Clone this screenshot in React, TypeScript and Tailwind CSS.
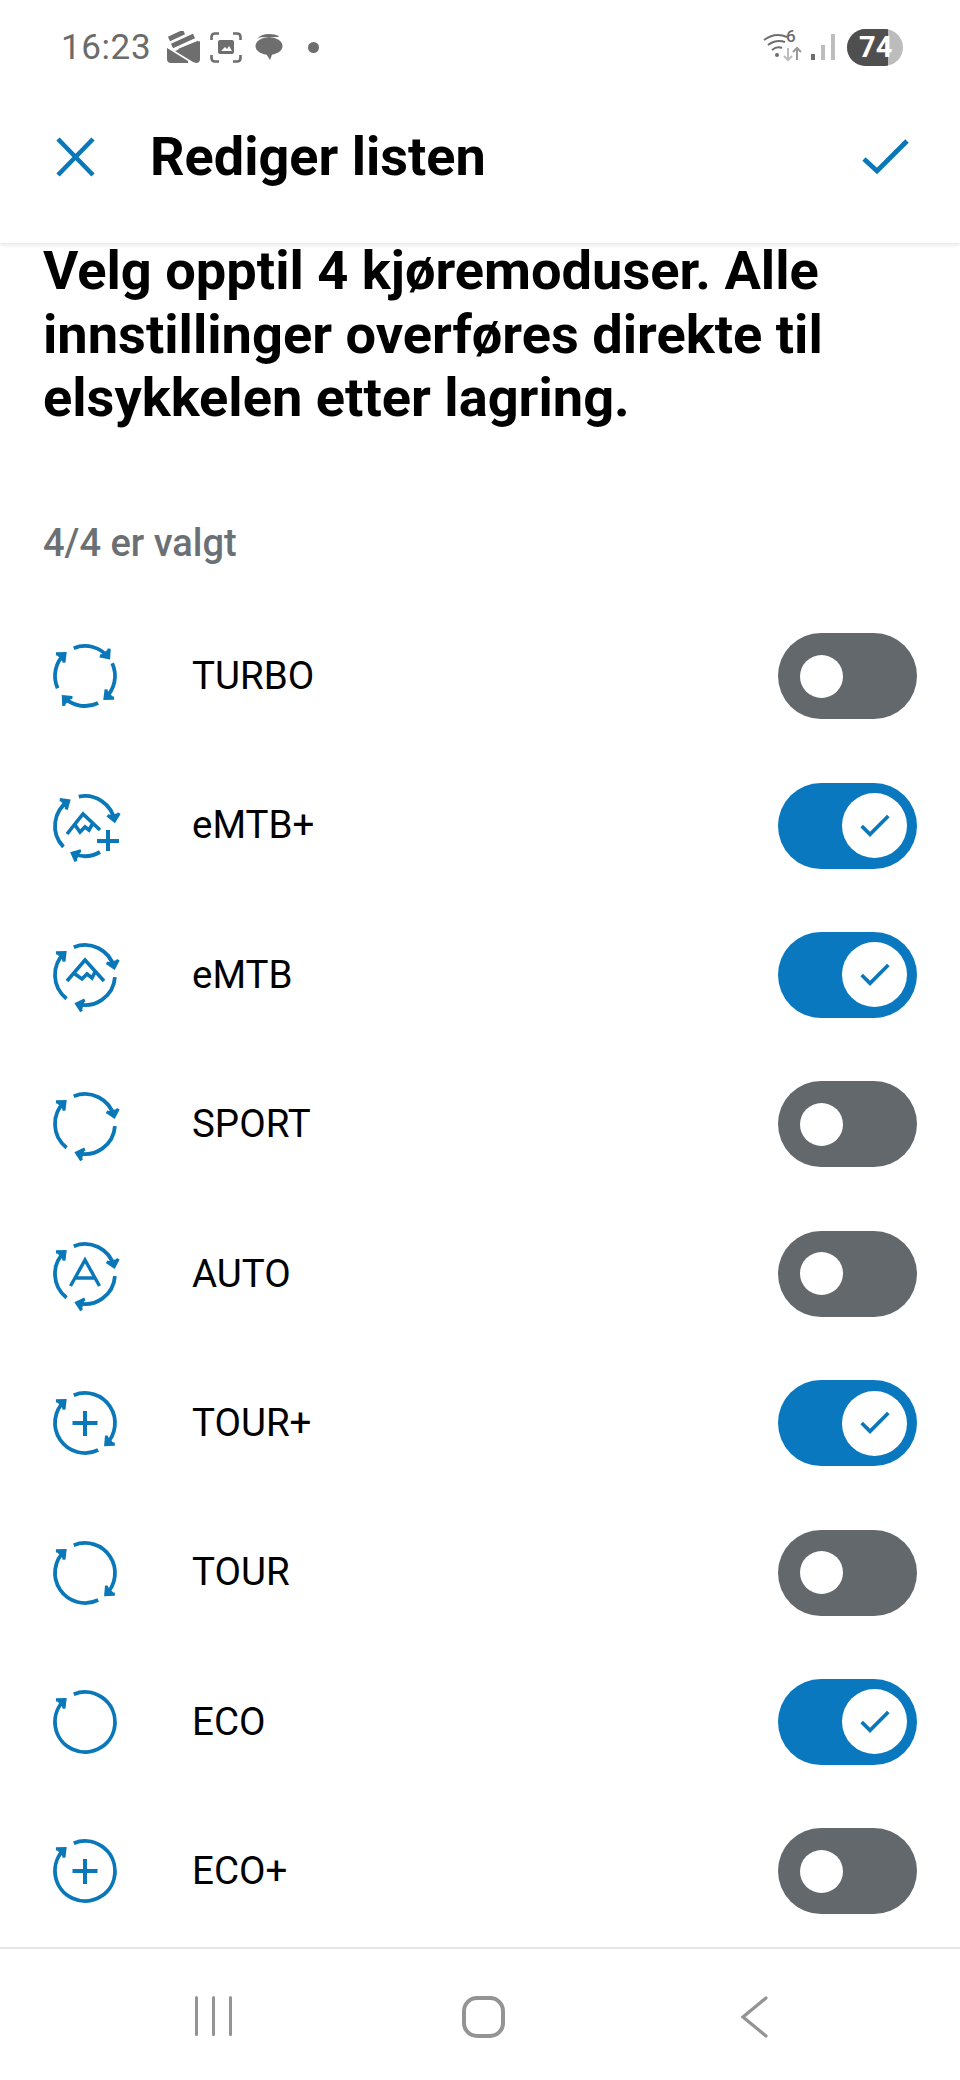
import { Check } from 'lucide-react'

type ModeIconProps = {
  arcs: [number, number][]
  extra?: 'plus' | 'auto' | 'mountain' | 'mountainPlus'
}

const pt = (deg: number, r: number): [number, number] => {
  const a = (deg * Math.PI) / 180
  return [36 + r * Math.sin(a), 36 - r * Math.cos(a)]
}

function ModeIcon({ arcs, extra }: ModeIconProps) {
  const r = 30
  return (
    <svg width="72" height="72" viewBox="0 0 72 72" fill="none" stroke="#0a78b8" strokeWidth="3.8" className="ml-[6px] shrink-0 overflow-visible">
      {arcs.map(([start, end]) => {
        const [sx, sy] = pt(start, r)
        const [ex, ey] = pt(end, r)
        const large = end - start > 180 ? 1 : 0
        // clockwise tangent at the arc end, head is a small filled triangle
        const dir = (end * Math.PI) / 180
        const h = 9
        const lx = ex - h * Math.cos(dir - 0.72)
        const ly = ey - h * Math.sin(dir - 0.72)
        const rx = ex - h * Math.cos(dir + 0.72)
        const ry = ey - h * Math.sin(dir + 0.72)
        return (
          <g key={start}>
            <path d={`M${sx} ${sy}A${r} ${r} 0 ${large} 1 ${ex} ${ey}`} />
            <path d={`M${lx} ${ly}L${ex} ${ey}L${rx} ${ry}`} fill="#0a78b8" strokeWidth="3.2" />
          </g>
        )
      })}
      {extra === 'plus' && <path d="M36 24V49M23.5 36H48.5" strokeWidth="4" />}
      {extra === 'auto' && <path d="M21.5 48L36 22L50.5 48M26 40H46" strokeWidth="3.4" />}
      {extra === 'mountain' && <path d="M18 42L36 21L55 42M26 35L33 40L38 35L43 39L46 33" strokeWidth="3.6" />}
      {extra === 'mountainPlus' && (
        <>
          <path d="M18 44L34 24L51 40M26 35L31 42L36 37L40 40L44 33" strokeWidth="3.6" />
          <path d="M59 40V61M48 51H70" strokeWidth="4" />
        </>
      )}
    </svg>
  )
}

function Toggle({ on }: { on: boolean }) {
  if (on) {
    return (
      <div className="flex h-[86px] w-[139px] shrink-0 items-center justify-end rounded-full bg-[#0a78bf] pr-[10px]">
        <div className="flex h-[65px] w-[65px] items-center justify-center rounded-full bg-white">
          <Check size={40} color="#0a78b8" strokeWidth={3.6} absoluteStrokeWidth strokeLinecap="butt" strokeLinejoin="miter" />
        </div>
      </div>
    )
  }
  return (
    <div className="flex h-[86px] w-[139px] shrink-0 items-center rounded-full bg-[#62686c] pl-[22px]">
      <div className="h-[43px] w-[43px] rounded-full bg-white" />
    </div>
  )
}

const modes: { name: string; on: boolean; icon: ModeIconProps }[] = [
  { name: 'TURBO', on: false, icon: { arcs: [[-22, 52], [65, 138], [154, 226], [246, 318]] } },
  { name: 'eMTB+', on: true, icon: { arcs: [[-12, 80], [150, 205], [226, 327]], extra: 'mountainPlus' } },
  { name: 'eMTB', on: true, icon: { arcs: [[-22, 76], [94, 196], [218, 318]], extra: 'mountain' } },
  { name: 'SPORT', on: false, icon: { arcs: [[-22, 76], [94, 196], [218, 318]] } },
  { name: 'AUTO', on: false, icon: { arcs: [[-22, 76], [94, 196], [218, 318]], extra: 'auto' } },
  { name: 'TOUR+', on: true, icon: { arcs: [[-22, 136], [154, 318]], extra: 'plus' } },
  { name: 'TOUR', on: false, icon: { arcs: [[-22, 136], [154, 318]] } },
  { name: 'ECO', on: true, icon: { arcs: [[-22, 318]] } },
  { name: 'ECO+', on: false, icon: { arcs: [[-22, 318]], extra: 'plus' } },
]

function StatusBar() {
  return (
    <div className="flex h-[94px] items-center pl-[61px] pr-[57px] text-[#6b6b6b]">
      <span className="text-[35px] leading-none tracking-[0.6px]">16:23</span>
      <svg width="33" height="32" viewBox="0 0 33 32" fill="#6e6e6e" className="ml-[16px]">
        <path d="M0 17L21 30V32H4Q0 32 0 28Z" />
        <path d="M26 31L8 20L33 10V28Q33 32 29 32Z" />
        <path d="M2 8L17 1M5 15L27 5M12 20L32 12" stroke="#6e6e6e" strokeWidth="5" />
        <path d="M8 18L30 8" stroke="#fff" strokeWidth="2" />
      </svg>
      <svg width="32" height="31" viewBox="0 0 32 31" fill="none" stroke="#6e6e6e" strokeWidth="2.6" className="ml-[10px]">
        <path d="M1.5 8V5Q1.5 1.5 5 1.5H9M23 1.5H27Q30.5 1.5 30.5 5V8M30.5 23V26Q30.5 29.5 27 29.5H23M9 29.5H5Q1.5 29.5 1.5 26V23" />
        <rect x="8" y="8" width="16" height="14" rx="2" fill="#6e6e6e" stroke="none" />
        <path d="M11 19L15 15L17 17L19 14L22 19Z" fill="#fff" stroke="none" />
      </svg>
      <svg width="28" height="28" viewBox="0 0 28 28" fill="#6e6e6e" className="ml-[13px]">
        <path d="M2 6Q6 1 14 1Q20 1 24 3L23 4H9Q4 4 2 6Z" />
        <ellipse cx="14" cy="13" rx="13.5" ry="9" />
        <path d="M10 19L15 27L18 19Z" />
      </svg>
      <div className="ml-[25px] h-[11px] w-[11px] rounded-full bg-[#6e6e6e]" />
      <div className="ml-auto flex items-center">
        <svg width="40" height="30" viewBox="0 0 40 30" fill="none" stroke="#6e6e6e" strokeWidth="2">
          <path d="M1 8Q12 0 24 5M5 13Q13 7 22 10M9 18Q14 14 19 16" />
          <circle cx="14" cy="23" r="2" fill="#6e6e6e" stroke="none" />
          <path d="M25 16V28M21 24L25 28L29 24" stroke="#bdbdbd" />
          <path d="M34 28V16M30 20L34 16L38 20" stroke="#9a9a9a" />
        </svg>
        <span className="ml-[-17px] mt-[-21px] w-[10px] text-[17px] leading-none font-medium">6</span>
        <svg width="26" height="28" viewBox="0 0 26 28" className="ml-[14px]">
          <rect x="1" y="21" width="4" height="6" fill="#6e6e6e" />
          <rect x="11" y="12" width="4" height="15" fill="#bdbdbd" />
          <rect x="21" y="1" width="4" height="26" fill="#bdbdbd" />
        </svg>
        <div className="relative ml-[11px] flex h-[37px] w-[56px] items-center overflow-hidden rounded-full bg-[#bcbcbc]">
          <div className="h-full w-[41px] bg-[#4f4f4f]" />
          <span className="absolute left-[12px] text-[29px] leading-none font-bold text-white">74</span>
        </div>
      </div>
    </div>
  )
}

function NavBar() {
  return (
    <div className="flex h-[133px] items-start border-t-2 border-[#e6e6e6] pt-[47px]">
      <div className="ml-[195px] flex h-[40px] gap-[14px]">
        <div className="h-full w-[3px] rounded-full bg-[#949494]" />
        <div className="h-full w-[3px] rounded-full bg-[#949494]" />
        <div className="h-full w-[3px] rounded-full bg-[#949494]" />
      </div>
      <div className="ml-[230px] h-[42px] w-[43px] rounded-[15px] border-[4px] border-[#949494]" />
      <svg width="27" height="42" viewBox="0 0 27 42" fill="none" stroke="#949494" strokeWidth="3.2" strokeLinecap="round" className="ml-[236px]">
        <path d="M25 2L2 21L25 40" />
      </svg>
    </div>
  )
}

export default function App() {
  return (
    <main className="flex h-[2080px] w-[960px] flex-col overflow-hidden bg-white font-['Roboto',sans-serif] text-black">
      <header className="z-10 bg-white shadow-[0_2px_4px_rgba(0,0,0,0.1)]">
        <StatusBar />
        <div className="flex h-[149px] items-center pb-[23px] pl-[55px] pr-[50px]">
          <svg width="40" height="40" viewBox="0 0 40 40" fill="none" stroke="#0a78b8" strokeWidth="4.6" className="shrink-0">
            <path d="M3 2L38 38M38 2L3 38" />
          </svg>
          <h1 className="ml-[55px] text-[54px] leading-none font-bold">Rediger listen</h1>
          <svg width="50" height="38" viewBox="0 0 50 38" fill="none" stroke="#0a78b8" strokeWidth="4.8" className="ml-auto shrink-0">
            <path d="M4 21L17 33L47 3" />
          </svg>
        </div>
      </header>
      <section className="flex-1 px-[43px]">
        <p className="mt-[-4px] text-[54.2px] leading-[63.5px] font-bold">
          Velg opptil 4 kjøremoduser. Alle
          <br />
          innstillinger overføres direkte til
          <br />
          elsykkelen etter lagring.
        </p>
        <p className="mt-[89px] text-[38px] leading-[48px] font-medium text-[#6b7075]">4/4 er valgt</p>
        <div className="mt-[35px]">
          {modes.map((m) => (
            <div key={m.name} className="flex h-[149.4px] items-center">
              <ModeIcon {...m.icon} />
              <span className="ml-[71px] text-[38.5px] leading-none font-[450]">{m.name}</span>
              <div className="ml-auto">
                <Toggle on={m.on} />
              </div>
            </div>
          ))}
        </div>
      </section>
      <NavBar />
    </main>
  )
}
